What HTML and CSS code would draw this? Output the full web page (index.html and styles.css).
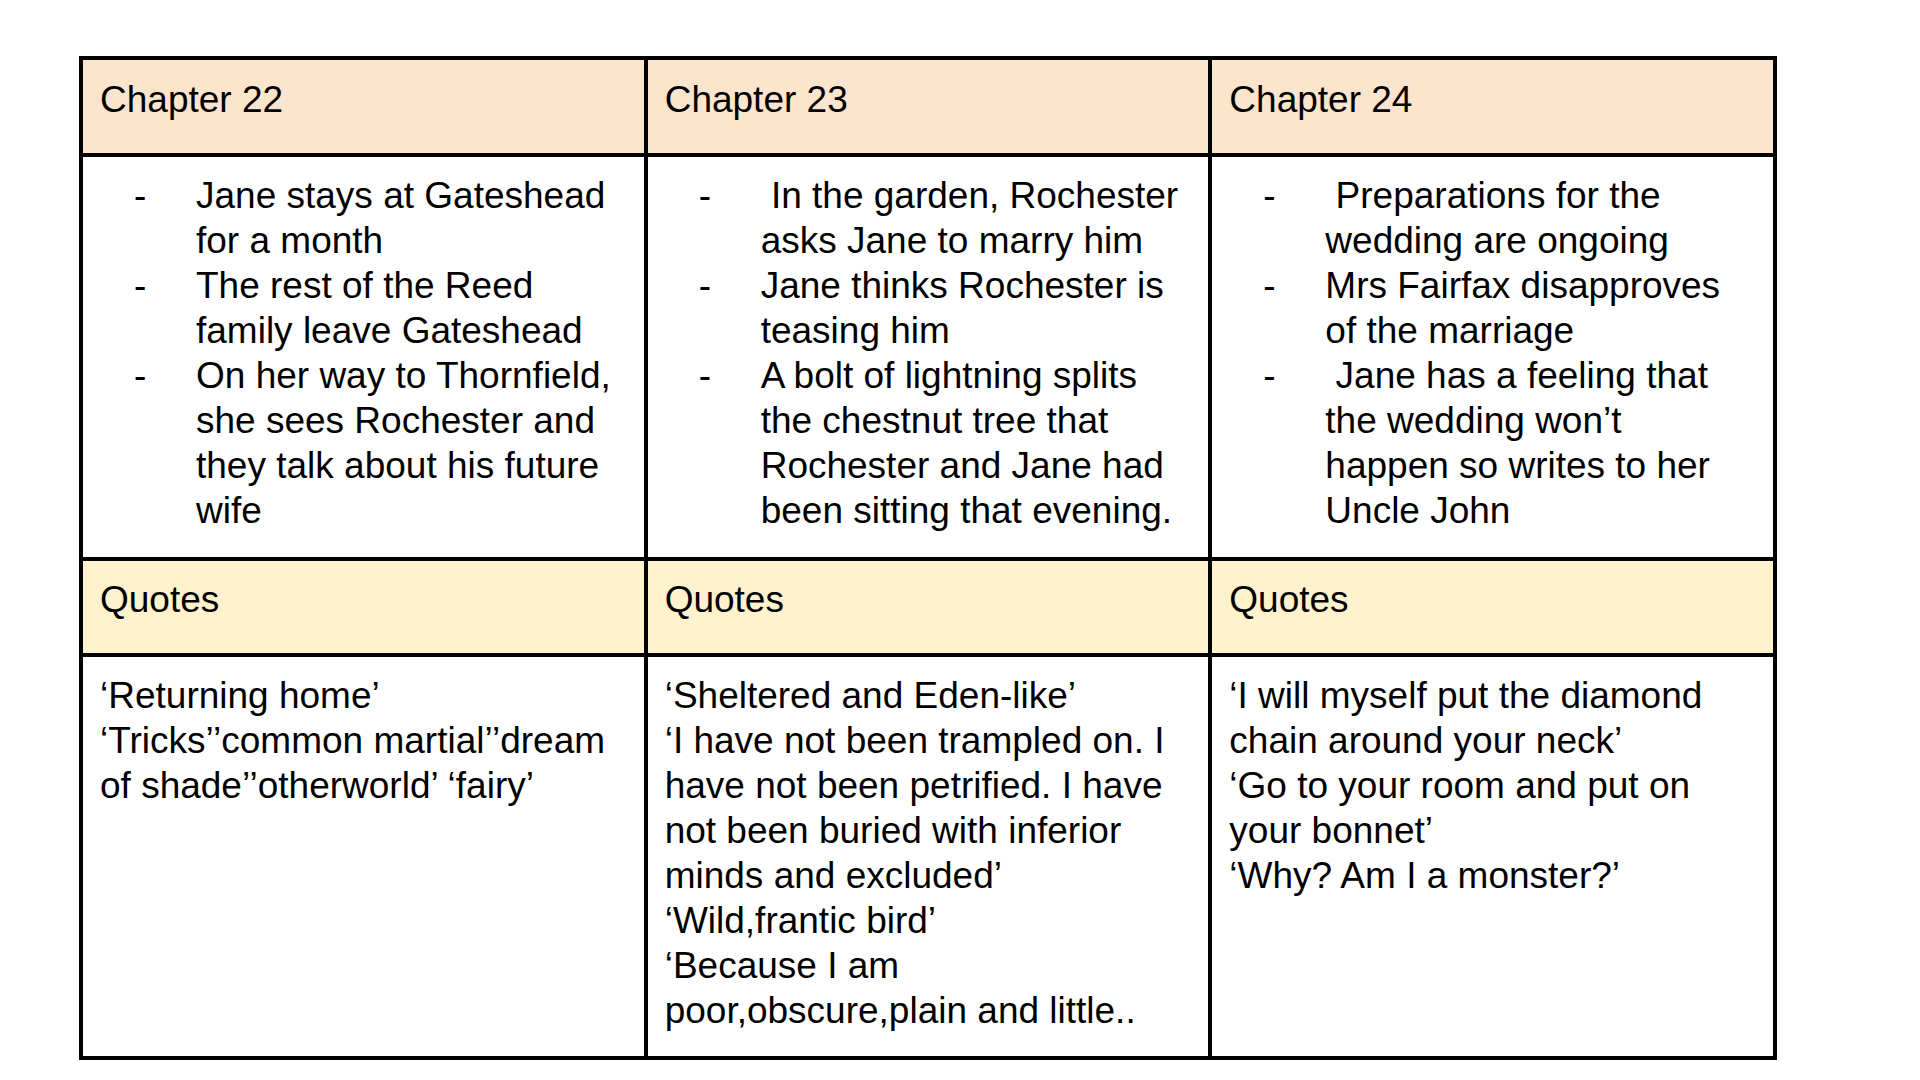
FILE: index.html
```html
<!DOCTYPE html>
<html lang="en">
<head>
<meta charset="utf-8">
<title>Jane Eyre – Chapters 22–24</title>
<link rel="stylesheet" href="styles.css">
</head>
<body>
<main class="sheet">
  <div class="grid">
    <div class="cell head">Chapter 22</div>
    <div class="cell head">Chapter 23</div>
    <div class="cell head">Chapter 24</div>

    <div class="cell body">
      <ul class="dash-list">
        <li><span class="dash">-</span><span class="txt">Jane stays at Gateshead<br>for a month</span></li>
        <li><span class="dash">-</span><span class="txt">The rest of the Reed<br>family leave Gateshead</span></li>
        <li><span class="dash">-</span><span class="txt">On her way to Thornfield,<br>she sees Rochester and<br>they talk about his future<br>wife</span></li>
      </ul>
    </div>
    <div class="cell body">
      <ul class="dash-list">
        <li><span class="dash">-</span><span class="txt">&nbsp;In the garden, Rochester<br>asks Jane to marry him</span></li>
        <li><span class="dash">-</span><span class="txt">Jane thinks Rochester is<br>teasing him</span></li>
        <li><span class="dash">-</span><span class="txt">A bolt of lightning splits<br>the chestnut tree that<br>Rochester and Jane had<br>been sitting that evening.</span></li>
      </ul>
    </div>
    <div class="cell body">
      <ul class="dash-list">
        <li><span class="dash">-</span><span class="txt">&nbsp;Preparations for the<br>wedding are ongoing</span></li>
        <li><span class="dash">-</span><span class="txt">Mrs Fairfax disapproves<br>of the marriage</span></li>
        <li><span class="dash">-</span><span class="txt">&nbsp;Jane has a feeling that<br>the wedding won’t<br>happen so writes to her<br>Uncle John</span></li>
      </ul>
    </div>

    <div class="cell quotes-head">Quotes</div>
    <div class="cell quotes-head">Quotes</div>
    <div class="cell quotes-head">Quotes</div>

    <div class="cell quotes">‘Returning home’<br>‘Tricks’’common martial’’dream<br>of shade’’otherworld’ ‘fairy’</div>
    <div class="cell quotes">‘Sheltered and Eden-like’<br>‘I have not been trampled on. I<br>have not been petrified. I have<br>not been buried with inferior<br>minds and excluded’<br>‘Wild,frantic bird’<br>‘Because I am<br>poor,obscure,plain and little..</div>
    <div class="cell quotes">‘I will myself put the diamond<br>chain around your neck’<br>‘Go to your room and put on<br>your bonnet’<br>‘Why? Am I a monster?’</div>
  </div>
</main>
</body>
</html>
```

FILE: styles.css
```css
html, body {
  margin: 0;
  padding: 0;
  background: #ffffff;
}

body {
  font-family: "Liberation Sans", Arial, sans-serif;
  color: #000000;
  font-size: 37px;
  line-height: 45px;
}

.sheet {
  padding: 56px 0 0 79px;
}

.grid {
  width: 1698px;
  box-sizing: border-box;
  display: grid;
  grid-template-columns: repeat(3, 1fr);
  gap: 4px;
  border: 4px solid #000000;
  background: #000000;
}

.cell {
  white-space: nowrap;
  padding-left: 17px;
  padding-right: 8px;
}

.head {
  background: #fce5cd;
  padding-top: 17px;
  padding-bottom: 31px;
}

.body {
  background: #ffffff;
  padding-top: 16px;
  padding-bottom: 24px;
}

.quotes-head {
  background: #fff2cc;
  padding-top: 16px;
  padding-bottom: 31px;
}

.quotes {
  background: #ffffff;
  padding-top: 16px;
  padding-bottom: 23px;
}

.dash-list {
  list-style: none;
  margin: 0;
  padding: 0 0 0 34px;
}

.dash-list li {
  display: flex;
}

.dash {
  flex: 0 0 62px;
}
```
